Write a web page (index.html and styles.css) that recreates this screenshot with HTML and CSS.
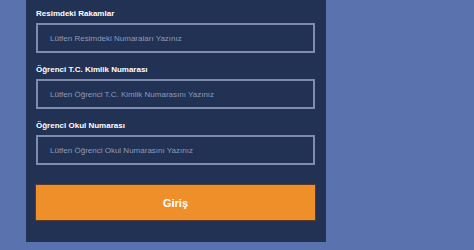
FILE: index.html
```html
<!DOCTYPE html>
<html lang="tr">
<head>
<meta charset="utf-8">
<link rel="stylesheet" href="styles.css">
</head>
<body>
<div class="page">
  <form class="panel">
    <label class="field">
      <span class="label">Resimdeki Rakamlar</span>
      <input class="input" type="text" placeholder="Lütfen Resimdeki Numaraları Yazınız">
    </label>
    <label class="field">
      <span class="label">Öğrenci T.C. Kimlik Numarası</span>
      <input class="input" type="text" placeholder="Lütfen Öğrenci T.C. Kimlik Numarasını Yazınız">
    </label>
    <label class="field">
      <span class="label">Öğrenci Okul Numarası</span>
      <input class="input" type="text" placeholder="Lütfen Öğrenci Okul Numarasını Yazınız">
    </label>
    <button class="submit" type="button">Giriş</button>
  </form>
</div>
</body>
</html>
```
FILE: styles.css
```css
html, body {
  margin: 0;
  padding: 0;
}
body {
  background: #5a72ae;
  font-family: "Liberation Sans", Arial, sans-serif;
  width: 474px;
  height: 250px;
  overflow: hidden;
}
.page {
  padding-left: 26px;
}
.panel {
  width: 279px;
  background: #223255;
  padding: 8px 11px 22px 10px;
  display: flex;
  flex-direction: column;
}
.field {
  display: flex;
  flex-direction: column;
}
.label {
  color: #ffffff;
  font-size: 8px;
  font-weight: bold;
  line-height: 12px;
  margin-bottom: 3px;
}
.input {
  box-sizing: border-box;
  width: 279px;
  height: 30px;
  margin: 0 0 11px 0;
  padding: 0 12px;
  background: #223255;
  border: 2px solid #7f8cae;
  color: #ffffff;
  font-family: "Liberation Sans", Arial, sans-serif;
  font-size: 8px;
  outline: none;
}
.input::placeholder {
  color: #8e9ab8;
}
.submit {
  margin-top: 9px;
  box-sizing: border-box;
  width: 279px;
  height: 35px;
  background: #ef8f29;
  border: none;
  box-shadow: 0 0 0 1px #5a3a2a;
  color: #ffffff;
  font-family: "Liberation Sans", Arial, sans-serif;
  font-size: 11px;
  font-weight: bold;
  cursor: pointer;
}
```
